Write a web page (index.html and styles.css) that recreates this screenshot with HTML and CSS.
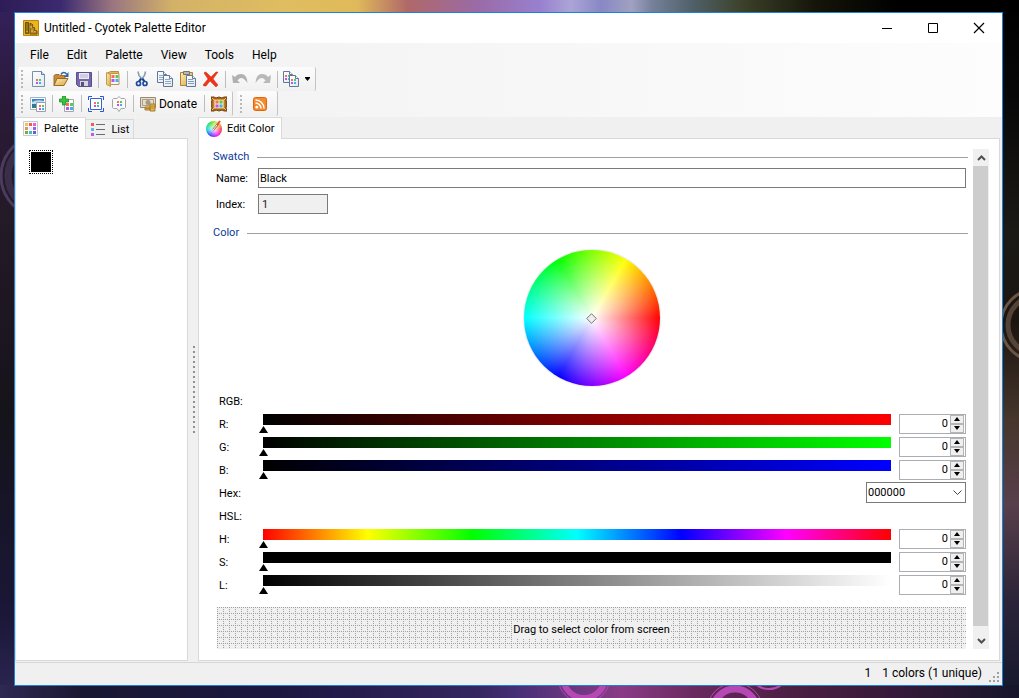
FILE: index.html
```html
<!DOCTYPE html>
<html lang="en">
<head>
<meta charset="utf-8">
<title>Untitled - Cyotek Palette Editor</title>
<link rel="stylesheet" href="styles.css">
</head>
<body class="desktop">
<svg class="ring ring-left" width="70" height="110" viewBox="0 0 70 110" aria-hidden="true"><g fill="none" stroke="#493c5c"><circle cx="42" cy="55" r="41" stroke-width="3"/><circle cx="42" cy="55" r="34" stroke-width="7" opacity=".6"/></g></svg>
<svg class="ring ring-right" width="20" height="90" viewBox="0 0 20 90" aria-hidden="true"><g fill="none" stroke="#6b5544"><circle cx="38" cy="45" r="36" stroke-width="3"/><circle cx="38" cy="45" r="29" stroke-width="5" opacity=".7"/></g></svg>
<svg class="ring ring-bottom" width="270" height="14" viewBox="0 0 270 14" aria-hidden="true"><g fill="none" stroke="#b548b4"><circle cx="44" cy="-8" r="21" stroke-width="6"/><circle cx="44" cy="-8" r="26" stroke-width="1"/><circle cx="195" cy="26" r="22" stroke-width="7"/><circle cx="195" cy="26" r="28" stroke-width="1"/><ellipse cx="229" cy="-6" rx="15" ry="10" stroke-width="2"/></g></svg>

<svg class="defs" aria-hidden="true">
  <defs>
    <linearGradient id="gold" x1="0" y1="0" x2="1" y2="1"><stop offset="0" stop-color="#fdeeb6"/><stop offset="1" stop-color="#d9a441"/></linearGradient>
    <linearGradient id="sheet" x1="0" y1="0" x2="1" y2="1"><stop offset="0" stop-color="#fff"/><stop offset="1" stop-color="#dfe8f1"/></linearGradient>
    <g id="cells"><path fill="#ff6a5a" d="M0 0h3v3H0z"/><path fill="#5acb50" d="M4 0h3v3H4z"/><path fill="#b25af0" d="M0 4h3v3H0z"/><path fill="#45aef0" d="M4 4h3v3H4z"/></g>
    <g id="cells-small"><path fill="#ff6a5a" d="M0 0h2v2H0z"/><path fill="#5acb50" d="M3 0h2v2H3z"/><path fill="#b25af0" d="M0 3h2v2H0z"/><path fill="#45aef0" d="M3 3h2v2H3z"/></g>
    <g id="page"><path d="M.5.5h6l3 3v8h-9z" fill="url(#sheet)" stroke="#60799b"/><path d="M6.500.5v3h3" fill="#fff" stroke="#60799b"/></g>
  </defs>
</svg>

<main class="window">
  <header class="titlebar">
    <svg class="icon" viewBox="0 0 16 16" aria-hidden="true"><path d="M.5.5h15v15H.5z" fill="#edb41c" stroke="#b8860b"/><path d="M2.500 2.500h3v11h-3z" fill="#9b7416" stroke="#68511b"/><path d="M7 3l3 2-1 2 3 1-1 2 3 1v3H7z" fill="#b68a20" stroke="#68511b"/><path d="M4 11v1M8 6v2M9 10v2M12 11v1" stroke="#f3d36b"/></svg>
    <h1 class="title">Untitled - Cyotek Palette Editor</h1>
    <button class="caption" aria-label="Minimize"><svg viewBox="0 0 12 12"><path d="M1 6.500h10" stroke="#000"/></svg></button>
    <button class="caption" aria-label="Maximize"><svg viewBox="0 0 12 12"><path d="M1.500 1.500h9v9h-9z" fill="none" stroke="#000"/></svg></button>
    <button class="caption" aria-label="Close"><svg viewBox="0 0 12 12"><path d="M1 1l10 10M11 1L1 11" stroke="#000" stroke-width="1.200"/></svg></button>
  </header>

  <div class="commands">
    <nav class="menu" aria-label="Main menu"><button>File</button><button>Edit</button><button>Palette</button><button>View</button><button>Tools</button><button>Help</button></nav>
    <div class="toolrow">
      <div class="toolbar" role="toolbar" aria-label="Standard">
        <span class="grip"></span>
        <button class="tool" aria-label="New"><svg class="icon" viewBox="0 0 16 16"><path d="M2.500.5h9l3 3v12h-12z" fill="url(#sheet)" stroke="#7890ab"/><path d="M11.500.5v3h3" fill="#d9e5ef" stroke="#5a7fa3"/><use href="#cells-small" x="6" y="8"/></svg></button>
        <button class="tool" aria-label="Open"><svg class="icon" viewBox="0 0 16 16"><path d="M1 14.500V4.500l2-1h3l1 1h5v3" fill="#c78b3a" stroke="#a06c2c"/><path d="M1 14.500l3-7h11l-4 7z" fill="url(#gold)" stroke="#9c6a25"/><path d="M8 3.500C9 1 12 1 13.500 3" fill="none" stroke="#2566b0" stroke-width="1.600"/><path d="M15.500 1v5H11z" fill="#2566b0"/></svg></button>
        <button class="tool" aria-label="Save"><svg class="icon" viewBox="0 0 16 16"><path d="M.5 1.500h15v14h-13l-2-2z" fill="#7465ad" stroke="#58508c"/><path d="M3 2h10v6H3z" fill="#eceaf3"/><path d="M4 4h8M4 6h8" stroke="#b8b3cc"/><path d="M4 10h8v5H4z" fill="#d6d7de"/><path d="M5 11h3v4H5z" fill="#585274"/></svg></button>
        <span class="sep"></span>
        <button class="tool" aria-label="Browse palettes"><svg class="icon" viewBox="0 0 16 16"><path d="M1.500 2.500l4-2h8v13h-8z" fill="#e2b55b" stroke="#c18c35"/><path d="M5.500 2.500h8.500v11H5.500z" fill="#f8f7f1" stroke="#b99551"/><use href="#cells" x="6.500" y="4"/><path d="M1.500 1.500l4 2v12l-4-2z" fill="url(#gold)" stroke="#c99a48"/></svg></button>
        <span class="sep"></span>
        <button class="tool" aria-label="Cut"><svg class="icon" viewBox="0 0 16 16"><path d="M4 .5l1 4 5 6M11.500.5l-1 4-5 6" fill="none" stroke="#8a9db2" stroke-width="1.600"/><path d="M7 7.500L5 10.500M8.500 7.500l2 3" stroke="#173f87" stroke-width="2"/><circle cx="4.500" cy="12.500" r="2" fill="#fff" stroke="#1c4d9e" stroke-width="1.700"/><circle cx="11" cy="12.500" r="2" fill="#fff" stroke="#1c4d9e" stroke-width="1.700"/></svg></button>
        <button class="tool" aria-label="Copy"><svg class="icon" viewBox="0 0 16 16"><use href="#page"/><path d="M2 4.500h4M2 6.500h4M2 8.500h4" stroke="#91a8c3"/><use href="#page" x="6" y="4"/><path d="M8 8.500h5M8 10.500h6M8 12.500h6" stroke="#91a8c3"/></svg></button>
        <button class="tool" aria-label="Paste"><svg class="icon" viewBox="0 0 16 16"><path d="M.5 1.500h12v13H.5z" fill="url(#gold)" stroke="#b18032"/><path d="M3.500.5h6v3h-6z" fill="#b9b7ad" stroke="#77746b"/><use href="#page" x="6" y="4"/><path d="M8 8.500h5M8 10.500h6M8 12.500h6" stroke="#829bb8"/></svg></button>
        <button class="tool" aria-label="Delete"><svg class="icon" viewBox="0 0 16 16"><path d="M1 2q1-2 3 0l4 4 5-5 2 0-5 7 5 6-2 2-6-6-4 5-2 0-1-1 5-6z" fill="#ed3519" stroke="#d32816" stroke-width=".5"/></svg></button>
        <span class="sep"></span>
        <button class="tool" aria-label="Undo"><svg class="icon" viewBox="0 0 16 16"><path d="M0 4l1 8h7L5.500 9.500Q9 5 13 9l2.500 3Q15 3 9 3 5 3 3 6z" fill="#b1b1b1"/></svg></button>
        <button class="tool" aria-label="Redo"><svg class="icon" viewBox="0 0 16 16"><path d="M16 4l-1 8H8l2.500-2.500Q7 5 3 9L.5 12Q1 3 7 3q4 0 6 3z" fill="#b9b9b9"/></svg></button>
        <span class="sep"></span>
        <button class="tool tool-drop" aria-label="Copy as"><svg class="icon" viewBox="0 0 16 16"><use href="#page"/><use href="#cells-small" x="2" y="4"/><use href="#page" x="6" y="4"/><use href="#cells-small" x="8" y="8"/></svg><svg class="caret" viewBox="0 0 7 4"><path d="M1 0h5v1L3.500 4 1 1z"/></svg></button>
      </div>
    </div>
    <div class="toolrow toolrow-last">
      <div class="toolbar" role="toolbar" aria-label="Tools">
        <span class="grip"></span>
        <button class="tool" aria-label="From image"><svg class="icon" viewBox="0 0 16 16"><path d="M.5 1.500h15v12H.5z" fill="#fff" stroke="#a6b5c5"/><path d="M2 3h12v4H2z" fill="#3b82ca"/><path d="M2 6q5-3 12-1v3H2z" fill="#bedcf0"/><path d="M2 8h12v4H2z" fill="#317c80"/><path d="M6.500 6.500h9v9h-9z" fill="#fff" stroke="#97a2ae"/><use href="#cells-small" x="9" y="9"/></svg></button>
        <span class="sep"></span>
        <button class="tool" aria-label="Add color"><svg class="icon" viewBox="0 0 16 16"><path d="M5.500 3.500h9v12h-9z" fill="#fff" stroke="#a3a7ac"/><use href="#cells" x="7" y="7"/><path d="M3.500 0h3v3h3v3h-3v3h-3V6h-3V3h3z" fill="#36c43a" stroke="#199325" stroke-width=".8"/></svg></button>
        <span class="sep"></span>
        <button class="tool" aria-label="Select all"><svg class="icon" viewBox="0 0 16 16"><path d="M2.500 2.500h11v11h-11z" fill="#fff" stroke="#3b61d4"/><path d="M.5 4V.5H4M12 .5h3.500V4M.5 12v3.500H4M12 15.500h3.500V12" fill="none" stroke="#2757d4"/><use href="#cells-small" x="6" y="6"/></svg></button>
        <button class="tool" aria-label="Balloon"><svg class="icon" viewBox="0 0 16 16"><path d="M2.500 2.500H6l2-2 2 2h3.500l1 1v8l-1 1H10l-2 3-2-3H2.500l-1-1v-8z" fill="#fafafa" stroke="#a2a4a6"/><use href="#cells-small" x="6" y="5"/></svg></button>
        <span class="sep"></span>
        <button class="tool donate"><svg class="icon" viewBox="0 0 16 16" aria-hidden="true"><path d="M.5 1.500h15v10H.5z" fill="#e5decf" stroke="#968c76"/><path d="M2.500 3.500h11v6h-11z" fill="none" stroke="#ad9f83"/><circle cx="8" cy="6.500" r="2.500" fill="#a69980"/><path d="M5 11h5v3H5zM10 8h5v7h-5z" fill="#e9b94e" stroke="#a57a2d"/><path d="M10 10h5M10 12h5M5 12.500h5" stroke="#b88430"/></svg>Donate</button>
        <span class="sep"></span>
        <button class="tool" aria-label="Gallery"><svg class="icon" viewBox="0 0 16 16"><path d="M0 1l3 0 2 1 3-1 3 1 2-1h3l-1 3 1 4-1 4 1 3h-3l-2-1-3 1-3-1-2 1H0l1-3-1-4 1-4z" fill="#a9681d" stroke="#72420e"/><path d="M3 3.500h10v9H3z" fill="#f7e8be" stroke="#d59a3a"/><path d="M1 2l2 2M15 2l-2 2M1 14l2-2M15 14l-2-2" stroke="#f2c05a"/><use href="#cells" x="4.500" y="4.500"/></svg></button>
      </div>
      <div class="toolbar" role="toolbar" aria-label="News">
        <span class="grip"></span>
        <button class="tool tool-wide" aria-label="RSS feed"><svg class="icon" viewBox="0 0 16 16"><rect x="1.500" y="1.500" width="13" height="13" rx="2" fill="#f58a2c" stroke="#dc6614"/><circle cx="4.800" cy="11.200" r="1.400" fill="#fff"/><path d="M3.500 7a5.500 5.500 0 0 1 5.500 5.500M3.500 4a8.500 8.500 0 0 1 8.500 8.500" fill="none" stroke="#fff" stroke-width="1.500"/></svg></button>
      </div>
    </div>
  </div>

  <div class="workspace">
    <section class="pane pane-palette">
      <div class="tabs" role="tablist">
        <button class="tab active" role="tab" aria-selected="true"><svg class="icon" viewBox="0 0 16 16" aria-hidden="true"><path d="M.5.5h14v14H.5z" fill="#fcfcfc" stroke="#c9c9d2"/><path fill="#e8c554" d="M2 2h3v3H2z"/><path fill="#ee5b54" d="M6 2h3v3H6z"/><path fill="#f35dca" d="M10 2h3v3h-3z"/><path fill="#e6925a" d="M2 6h3v3H2z"/><path fill="#e7ecff" d="M6 6h3v3H6z"/><path fill="#a45bea" d="M10 6h3v3h-3z"/><path fill="#6ab443" d="M2 10h3v3H2z"/><path fill="#47bbbf" d="M6 10h3v3H6z"/><path fill="#4f68dd" d="M10 10h3v3h-3z"/></svg>Palette</button>
        <button class="tab" role="tab" aria-selected="false"><svg class="icon" viewBox="0 0 16 16" aria-hidden="true"><path fill="#f15b55" d="M1 1h3v3H1z"/><path fill="#58b9e3" d="M1 6h3v3H1z"/><path fill="#ba5bed" d="M1 11h3v3H1z"/><path d="M6 2.500h9M6 7.500h9M6 12.500h9" stroke="#6c6c6c"/></svg>List</button>
      </div>
      <div class="sheet swatches"><button class="swatch" aria-label="Black"></button></div>
    </section>
    <div class="splitter"></div>
    <section class="pane pane-editor">
      <div class="tabs" role="tablist">
        <button class="tab active" role="tab" aria-selected="true"><span class="icon mini-wheel"><svg viewBox="0 0 16 16" aria-hidden="true"><path d="M7 9l5-6" stroke="#8a5c38" stroke-width="2"/><path d="M7 9l4-5" stroke="#fff" stroke-width="1"/><path d="M11 4l3-4" stroke="#e45248" stroke-width="2"/></svg></span>Edit Color</button>
      </div>
      <div class="sheet editor">
        <form class="form">
          <h2 class="group">Swatch</h2>
          <div class="field"><label for="name">Name:</label><input id="name" class="text" type="text" value="Black"></div>
          <div class="field"><label for="index">Index:</label><input id="index" class="text short" type="text" value="1" readonly></div>
          <h2 class="group group-color">Color</h2>
          <div class="wheel" role="img" aria-label="Color wheel"><svg class="marker" viewBox="0 0 11 11"><path d="M5.500.7l4.800 4.800-4.800 4.800L.7 5.500z" fill="#eee" stroke="#777" /></svg></div>
          <div class="rows">
            <div class="row"><span class="caption-text">RGB:</span></div>
            <div class="row"><label for="r">R:</label><input id="r" class="slider red" type="range" min="0" max="255" value="0"><span class="spin"><input type="number" aria-label="Red" value="0"><span class="steps"><button type="button" class="step" aria-label="Increase red"></button><button type="button" class="step down" aria-label="Decrease red"></button></span></span></div>
            <div class="row"><label for="g">G:</label><input id="g" class="slider green" type="range" min="0" max="255" value="0"><span class="spin"><input type="number" aria-label="Green" value="0"><span class="steps"><button type="button" class="step" aria-label="Increase green"></button><button type="button" class="step down" aria-label="Decrease green"></button></span></span></div>
            <div class="row"><label for="b">B:</label><input id="b" class="slider blue" type="range" min="0" max="255" value="0"><span class="spin"><input type="number" aria-label="Blue" value="0"><span class="steps"><button type="button" class="step" aria-label="Increase blue"></button><button type="button" class="step down" aria-label="Decrease blue"></button></span></span></div>
            <div class="row row-hex"><label for="hex">Hex:</label><span class="combo"><select id="hex"><option>000000</option></select><svg class="chevron" viewBox="0 0 9 6" aria-hidden="true"><path d="M.5.5l4 4 4-4" fill="none" stroke="#444"/></svg></span></div>
            <div class="row"><span class="caption-text">HSL:</span></div>
            <div class="row"><label for="h">H:</label><input id="h" class="slider hue" type="range" min="0" max="359" value="0"><span class="spin"><input type="number" aria-label="Hue" value="0"><span class="steps"><button type="button" class="step" aria-label="Increase hue"></button><button type="button" class="step down" aria-label="Decrease hue"></button></span></span></div>
            <div class="row"><label for="s">S:</label><input id="s" class="slider saturation" type="range" min="0" max="100" value="0"><span class="spin"><input type="number" aria-label="Saturation" value="0"><span class="steps"><button type="button" class="step" aria-label="Increase saturation"></button><button type="button" class="step down" aria-label="Decrease saturation"></button></span></span></div>
            <div class="row"><label for="l">L:</label><input id="l" class="slider lightness" type="range" min="0" max="100" value="0"><span class="spin"><input type="number" aria-label="Lightness" value="0"><span class="steps"><button type="button" class="step" aria-label="Increase lightness"></button><button type="button" class="step down" aria-label="Decrease lightness"></button></span></span></div>
          </div>
          <button type="button" class="picker"><span>Drag to select color from screen</span></button>
        </form>
        <div class="scrollbar">
          <button aria-label="Scroll up"><svg viewBox="0 0 9 6"><path d="M1 5l3.500-3.500L8 5" fill="none" stroke="#505050" stroke-width="2"/></svg></button>
          <div class="thumb"></div>
          <button aria-label="Scroll down"><svg viewBox="0 0 9 6"><path d="M1 1l3.500 3.500L8 1" fill="none" stroke="#505050" stroke-width="2"/></svg></button>
        </div>
      </div>
    </section>
  </div>

  <footer class="status"><span>1</span><span>1 colors (1 unique)</span><svg class="sizer" viewBox="0 0 11 11" aria-hidden="true"><path fill="#a0a0a0" d="M8 0h2v2H8zM4 4h2v2H4zM8 4h2v2H8zM0 8h2v2H0zM4 8h2v2H4zM8 8h2v2H8z"/></svg></footer>
</main>
</body>
</html>
```

FILE: styles.css
```css
* { box-sizing: border-box; }

.desktop {
  position: relative;
  display: flex;
  min-height: 100vh;
  margin: 0;
  padding: 12px 16px 13px 14px;
  overflow: hidden;
  font: 11px/16px Roboto, sans-serif;
  color: #000;
  background:
    linear-gradient(90deg, #2d1c55 0, #3b2a70 6%, #9a7580 11%, #d3b268 17%, #dfbd60 28%, #e0ba5a 35%, #b06868 40%, #9a6ba8 47%, #9880cf 53%, #aca4d6 56%, #8888c5 59%, #a1a1c2 62%, #75809a 64%, #506068 68%, #3b4028 73%, #15150a 80%, #000 88%) top / 100% 12px no-repeat,
    linear-gradient(90deg, #2e2853 0, #191832 8%, #1b1740 27%, #352660 47%, #493078 51%, #8a3b86 61%, #6a2a60 68%, #4a1f42 78%, #35193a 88%, #16162b 100%) bottom / 100% 14px no-repeat,
    linear-gradient(#33215e 0, #2b1a3a 14%, #241a28 30%, #15131a 60%, #1a1738 88%, #2c2754 100%) left / 14px 100% no-repeat,
    linear-gradient(#000 0, #080808 14%, #1b1a15 33%, #1b1510 46%, #46362b 60%, #583f4b 72%, #2b2438 86%, #15182c 100%) right / 16px 100% no-repeat,
    #1a1830;
}

.defs { position: absolute; width: 0; height: 0; }
.ring { position: absolute; }
.ring-left { left: 0; top: 121px; }
.ring-right { right: 0; top: 280px; }
.ring-bottom { left: 540px; bottom: 0; }

button, input, select { margin: 0; font: inherit; color: inherit; }
button { padding: 0; border: 0; background: none; }
.icon { flex: none; width: 16px; height: 16px; }

.window {
  position: relative;
  display: flex;
  flex: 1;
  flex-direction: column;
  min-width: 0;
  border: 1px solid #1883d7;
  background: #f0f0f0;
}

/* Title bar */
.titlebar { display: flex; flex: none; align-items: center; height: 30px; padding-left: 8px; background: #fff; }
.title { flex: 1; margin: 0 0 0 5px; font-size: 12px; font-weight: 400; }
.caption { display: flex; align-items: center; justify-content: center; width: 46px; height: 30px; }
.caption svg { width: 12px; height: 12px; }

/* Menu and toolbars */
.commands { flex: none; font-size: 12px; background: linear-gradient(90deg, #f0f0f0, #fdfdfd); }
.menu { display: flex; gap: 18px; height: 24px; padding-left: 15px; }
.toolrow { display: flex; gap: 4px; height: 24px; padding-left: 3px; }
.toolrow-last { height: 26px; padding-bottom: 1px; }
.toolbar {
  display: flex;
  align-items: center;
  padding: 0 2px 0 3px;
  border-right: 1px solid #c4c4c4;
  border-radius: 2px;
  background: linear-gradient(#fcfcfc, #f0f0f0);
}
.grip { width: 2px; height: 18px; margin-right: 3px; background: repeating-linear-gradient(#b9b9b9 0 2px, transparent 2px 4px); }
.tool { display: flex; align-items: center; justify-content: center; width: 23px; height: 23px; }
.sep { width: 6px; height: 17px; background: linear-gradient(#bdbdbd, #bdbdbd) center / 1px 100% no-repeat; }
.tool-drop { gap: 5px; width: 33px; }
.caret { width: 7px; height: 4px; }
.donate { gap: 3px; width: 65px; }
.tool-wide { width: 30px; }

/* Panes */
.workspace { display: flex; flex: 1; min-height: 0; }
.pane { display: flex; flex-direction: column; min-width: 0; }
.pane-palette { width: 173px; }
.pane-editor { flex: 1; margin-right: 2px; }
.tabs { display: flex; align-items: flex-end; height: 21px; }
.tab {
  display: flex;
  align-items: center;
  gap: 5px;
  height: 19px;
  padding: 2px 4px 0;
  border: 1px solid #d9d9d9;
  border-bottom: 0;
  border-left: 0;
  background: #f0f0f0;
}
.tab.active { position: relative; height: 22px; margin-bottom: -1px; padding: 0 7px; border-left: 1px solid #d9d9d9; background: #fff; }
.sheet { flex: 1; border: 1px solid #d9d9d9; background: #fff; }
.swatches { padding: 11px 13px; }
.swatch { display: block; width: 24px; height: 24px; padding: 1px; border: 1px dotted #000; background: #000 content-box; }
.mini-wheel {
  border-radius: 50%;
  background: radial-gradient(closest-side, #fff, transparent), conic-gradient(from 90deg, #f33, #f0f, #33f, #0dd, #3d3, #ee3, #f33);
}
.mini-wheel svg { display: block; overflow: visible; }

.splitter {
  width: 10px;
  background: repeating-linear-gradient(#909090 0 2px, transparent 2px 5px) 5px 50% / 2px 87px no-repeat;
}

/* Editor form */
.editor { display: flex; align-items: flex-start; padding: 10px 10px 11px 0; }
.form { flex: 1; min-width: 0; padding: 0 7px 0 14px; }
.group { display: flex; align-items: center; gap: 8px; height: 16px; margin: 0 -2px 3px 0; font-size: 11px; line-height: 18px; font-weight: 400; color: #0a3a9c; }
.group::after { content: ""; flex: 1; height: 1px; background: #a0a0a0; }
.group-color { margin: 11px -2px 9px 0; }
.field { display: grid; grid-template-columns: 42px 1fr; align-items: center; padding-left: 3px; }
.field + .field { margin-top: 6px; }
.field label, .row label, .caption-text { padding-top: 2px; }
.text { width: 100%; height: 20px; padding: 0 1px; border: 1px solid #7a7a7a; border-radius: 0; background: #fff; }
.short { width: 70px; padding: 0 3px; color: #222; background: #f0f0f0; }

.wheel {
  display: flex;
  align-items: center;
  justify-content: center;
  width: 136px;
  height: 136px;
  margin: 0 0 3px calc(50% - 66px);
  border-radius: 50%;
  box-shadow: 0 0 2px #bbb;
  background: radial-gradient(closest-side, #fff, rgba(255, 255, 255, 0)), conic-gradient(from 90deg, #f00, #f0f, #00f, #0ff, #0f0, #ff0, #f00);
}
.marker { width: 11px; height: 11px; }

.rows { padding-left: 6px; }
.row { display: grid; grid-template-columns: 40px 1fr 67px; height: 23px; align-items: center; }
.slider { appearance: none; width: calc(100% - 4px); height: 21px; margin: 0; background: none; }
.slider::-webkit-slider-runnable-track { height: 21px; background: var(--ramp) 4px 1px / calc(100% - 8px) 11px no-repeat; }
.slider::-webkit-slider-thumb { appearance: none; width: 9px; height: 7px; margin-top: 13px; background: #000; clip-path: polygon(50% 0, 100% 100%, 0 100%); }
.red { --ramp: linear-gradient(90deg, #000, #f00); }
.green { --ramp: linear-gradient(90deg, #000, #0f0); }
.blue { --ramp: linear-gradient(90deg, #000, #00f); }
.hue { --ramp: linear-gradient(90deg, #f00, #ff0, #0f0, #0ff, #00f, #f0f, #f00); }
.saturation { --ramp: linear-gradient(#000, #000); }
.lightness { --ramp: linear-gradient(90deg, #000, #fff); }

.spin { display: flex; height: 20px; border: 1px solid #abadb3; background: #fff; }
.spin input { flex: 1; min-width: 0; padding: 0 2px 0 0; border: 0; background: none; text-align: right; appearance: textfield; }
.spin input::-webkit-inner-spin-button { display: none; }
.steps { display: flex; flex-direction: column; width: 15px; padding-right: 1px; }
.step { display: flex; flex: 1; align-items: center; justify-content: center; border: 1px solid #b5b5b5; background: #efefef; }
.step::before { content: ""; width: 6px; height: 4px; background: #000; clip-path: polygon(50% 0, 100% 100%, 0 100%); }
.down::before { clip-path: polygon(0 0, 100% 0, 50% 100%); }

.row-hex { grid-template-columns: 40px 1fr; }
.combo { position: relative; justify-self: end; width: 100px; height: 21px; }
.combo select { appearance: none; display: block; width: 100%; height: 21px; padding: 0 1px; border: 1px solid #7a7a7a; border-radius: 0; background: #fff; }
.chevron { position: absolute; top: 8px; right: 4px; width: 9px; height: 6px; pointer-events: none; }

.picker {
  display: flex;
  align-items: center;
  justify-content: center;
  width: calc(100% - 4px);
  height: 42px;
  margin: 11px 0 0 4px;
  padding-top: 3px;
  background:
    repeating-linear-gradient(90deg, transparent 0 1px, #f0f0f0 1px 2px),
    repeating-linear-gradient(transparent 0 1px, #f0f0f0 1px 2px),
    repeating-linear-gradient(90deg, #a0a0a0 0 1px, transparent 1px 6px),
    repeating-linear-gradient(#a0a0a0 0 1px, transparent 1px 6px),
    #f0f0f0;
}
.picker span { background: #f0f0f0; }

.scrollbar { display: flex; align-self: stretch; flex-direction: column; width: 16px; background: #f0f0f0; }
.scrollbar button { display: flex; align-items: center; justify-content: center; height: 17px; }
.scrollbar svg { width: 9px; height: 6px; }
.thumb { flex: 1; margin: 0 1px 6px 0; background: #cdcdcd; }

/* Status bar */
.status { display: flex; flex: none; align-items: center; justify-content: flex-end; gap: 11px; height: 23px; margin-top: 1px; padding-bottom: 2px; border-top: 1px solid #d7d7d7; font-size: 12px; }
.sizer { align-self: flex-end; width: 11px; height: 11px; margin: 0 2px 0 -4px; }
```
